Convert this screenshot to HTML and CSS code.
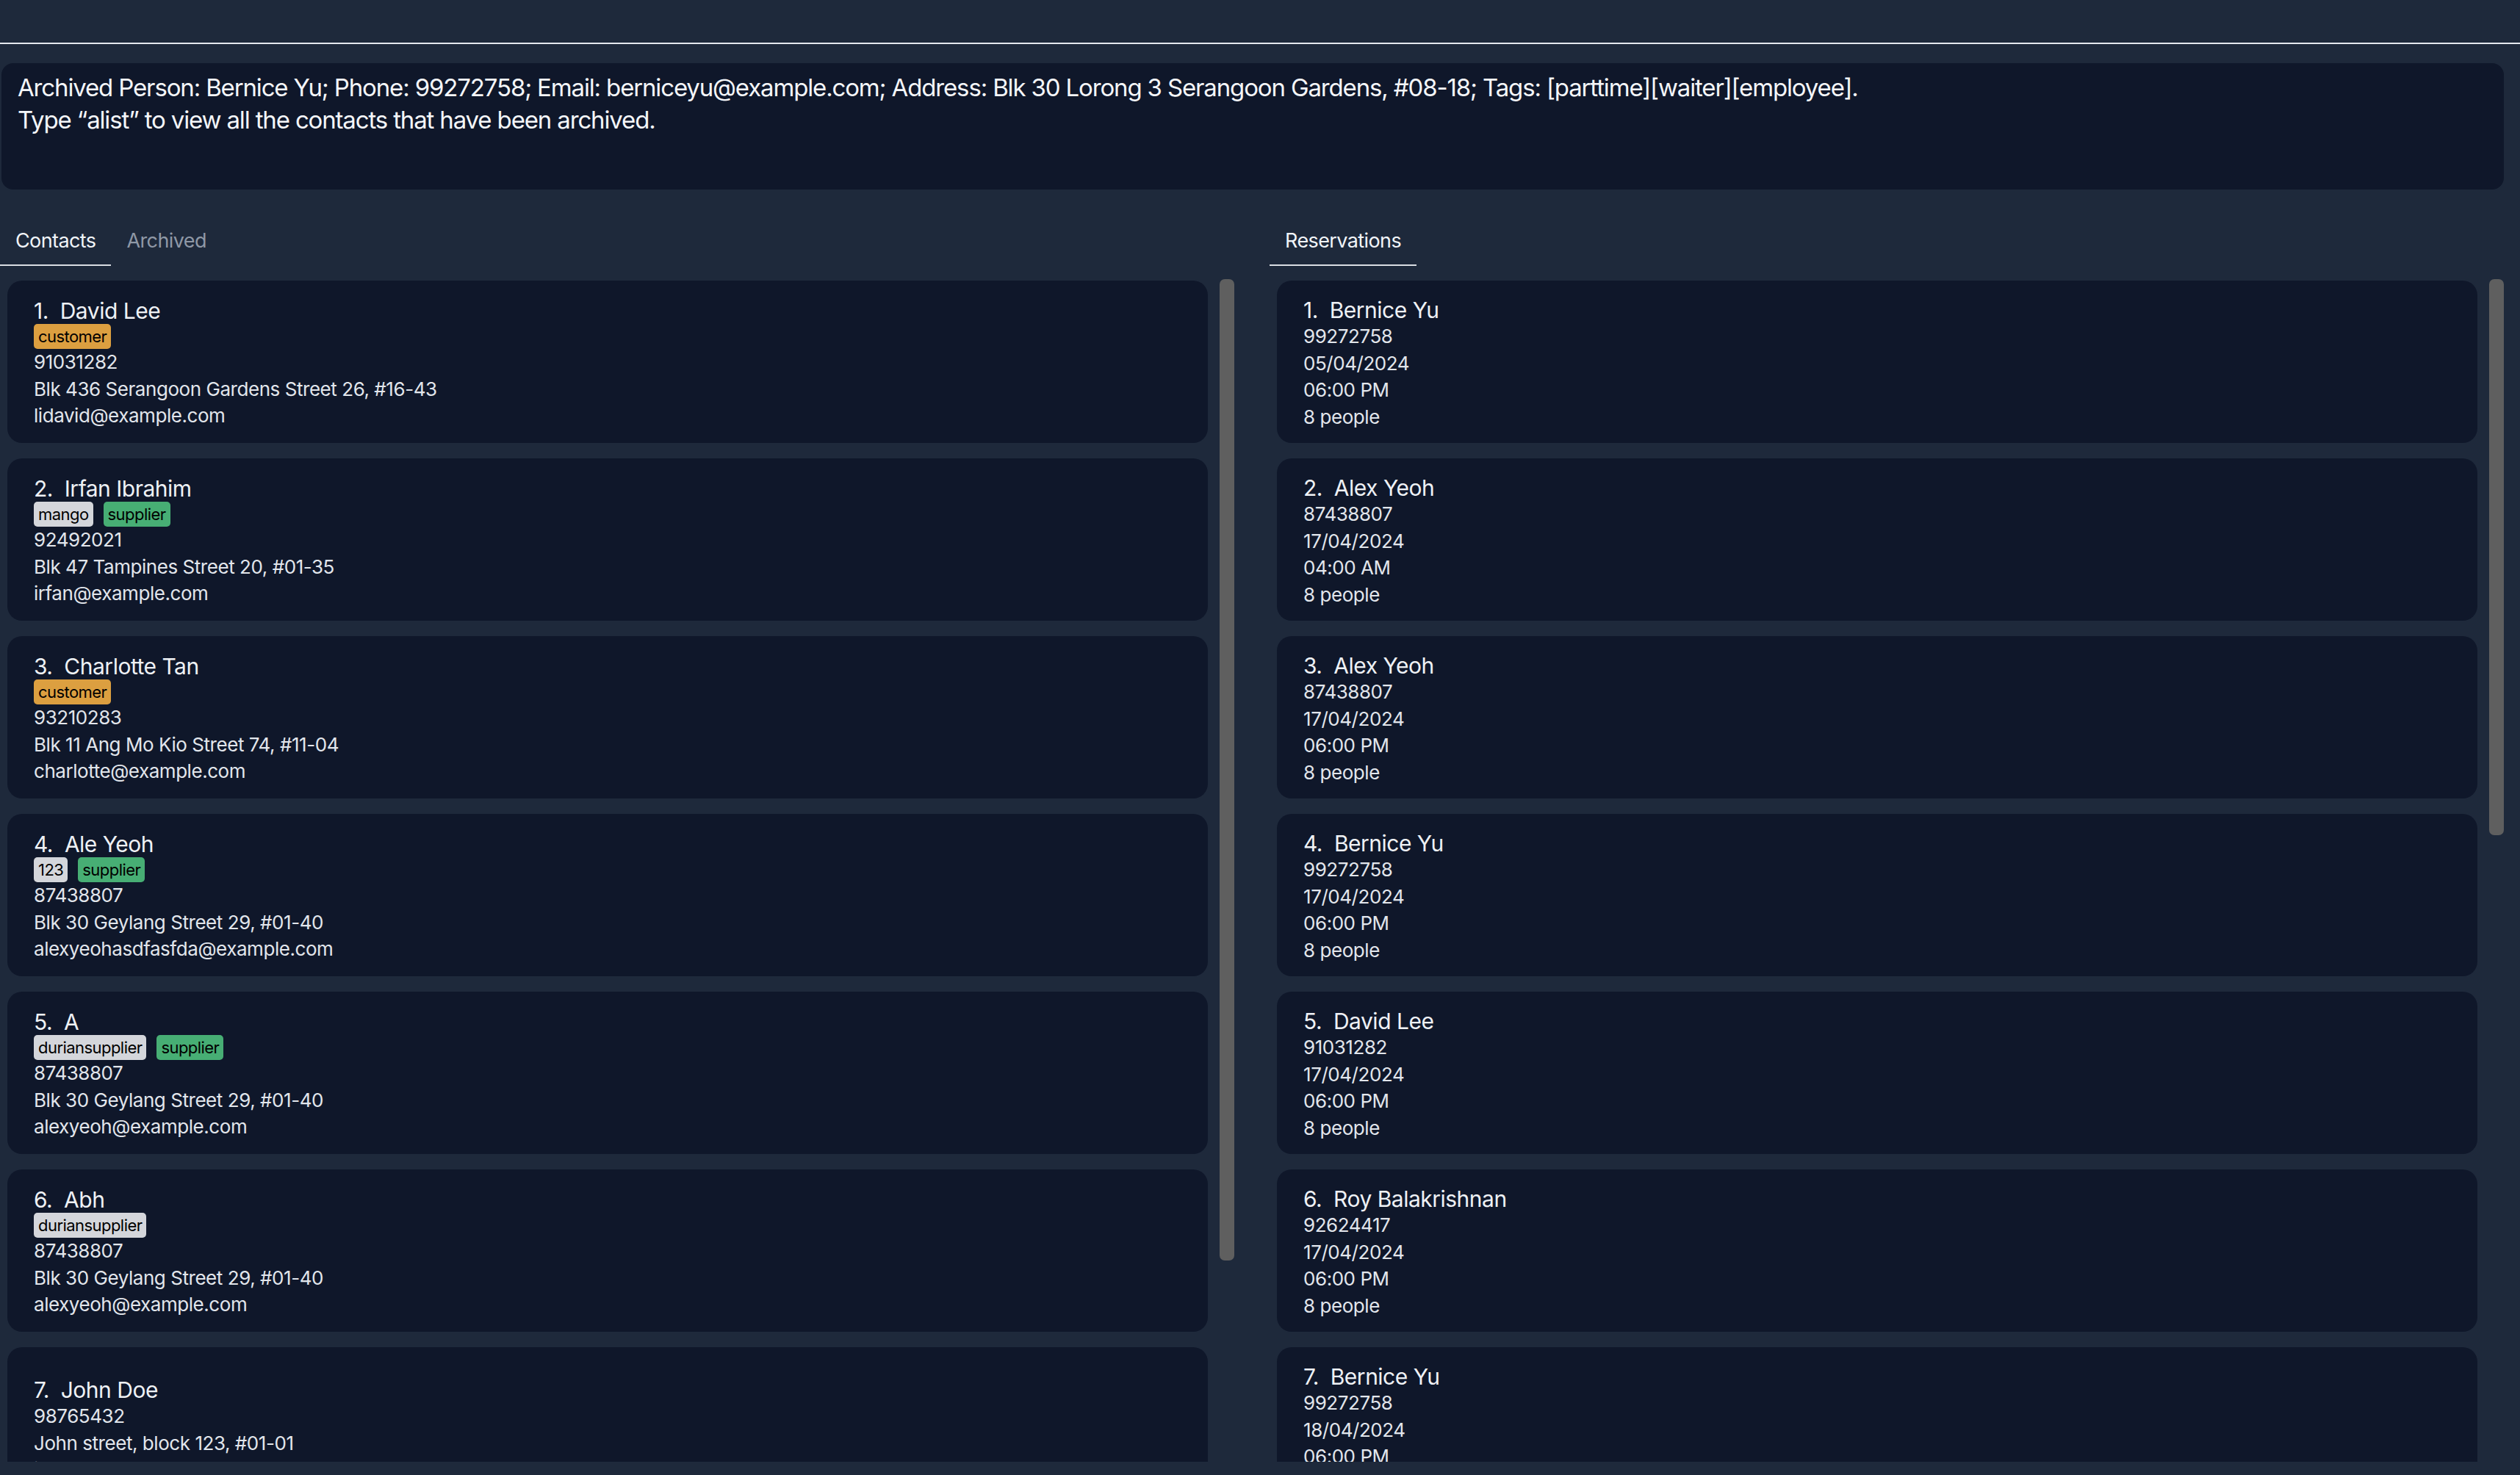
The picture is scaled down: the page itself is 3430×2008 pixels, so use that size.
FILE: index.html
```html
<!DOCTYPE html>
<html lang="en">
<head>
<meta charset="utf-8">
<title>Contacts</title>
<link rel="stylesheet" href="styles.css">
</head>
<body>
<div class="topbar"></div>
<div class="result">
  <p>Archived Person: Bernice Yu; Phone: 99272758; Email: berniceyu@example.com; Address: Blk 30 Lorong 3 Serangoon Gardens, #08-18; Tags: [parttime][waiter][employee].</p>
  <p>Type “alist” to view all the contacts that have been archived.</p>
</div>
<div class="panels">
  <section class="panel">
    <div class="tabs">
      <span class="tab active">Contacts</span>
      <span class="tab">Archived</span>
    </div>
    <div class="listwrap">
      <div class="list">
        <div class="card">
          <div class="name">1.&nbsp; David Lee</div>
          <div class="tags"><span class="tag orange">customer</span></div>
          <div class="line">91031282</div>
          <div class="line">Blk 436 Serangoon Gardens Street 26, #16-43</div>
          <div class="line">lidavid@example.com</div>
        </div>
        <div class="card">
          <div class="name">2.&nbsp; Irfan Ibrahim</div>
          <div class="tags"><span class="tag gray">mango</span><span class="tag green">supplier</span></div>
          <div class="line">92492021</div>
          <div class="line">Blk 47 Tampines Street 20, #01-35</div>
          <div class="line">irfan@example.com</div>
        </div>
        <div class="card">
          <div class="name">3.&nbsp; Charlotte Tan</div>
          <div class="tags"><span class="tag orange">customer</span></div>
          <div class="line">93210283</div>
          <div class="line">Blk 11 Ang Mo Kio Street 74, #11-04</div>
          <div class="line">charlotte@example.com</div>
        </div>
        <div class="card">
          <div class="name">4.&nbsp; Ale Yeoh</div>
          <div class="tags"><span class="tag gray">123</span><span class="tag green">supplier</span></div>
          <div class="line">87438807</div>
          <div class="line">Blk 30 Geylang Street 29, #01-40</div>
          <div class="line">alexyeohasdfasfda@example.com</div>
        </div>
        <div class="card">
          <div class="name">5.&nbsp; A</div>
          <div class="tags"><span class="tag gray">duriansupplier</span><span class="tag green">supplier</span></div>
          <div class="line">87438807</div>
          <div class="line">Blk 30 Geylang Street 29, #01-40</div>
          <div class="line">alexyeoh@example.com</div>
        </div>
        <div class="card">
          <div class="name">6.&nbsp; Abh</div>
          <div class="tags"><span class="tag gray">duriansupplier</span></div>
          <div class="line">87438807</div>
          <div class="line">Blk 30 Geylang Street 29, #01-40</div>
          <div class="line">alexyeoh@example.com</div>
        </div>
        <div class="card">
          <div class="name">7.&nbsp; John Doe</div>
          <div class="line">98765432</div>
          <div class="line">John street, block 123, #01-01</div>
          <div class="line">johnd@example.com</div>
        </div>
      </div>
      <div class="track"><div class="thumb" style="height:1336px"></div></div>
    </div>
  </section>
  <section class="panel">
    <div class="tabs">
      <span class="tab active">Reservations</span>
    </div>
    <div class="listwrap">
      <div class="list">
        <div class="card">
          <div class="name">1.&nbsp; Bernice Yu</div>
          <div class="line">99272758</div>
          <div class="line">05/04/2024</div>
          <div class="line">06:00 PM</div>
          <div class="line">8 people</div>
        </div>
        <div class="card">
          <div class="name">2.&nbsp; Alex Yeoh</div>
          <div class="line">87438807</div>
          <div class="line">17/04/2024</div>
          <div class="line">04:00 AM</div>
          <div class="line">8 people</div>
        </div>
        <div class="card">
          <div class="name">3.&nbsp; Alex Yeoh</div>
          <div class="line">87438807</div>
          <div class="line">17/04/2024</div>
          <div class="line">06:00 PM</div>
          <div class="line">8 people</div>
        </div>
        <div class="card">
          <div class="name">4.&nbsp; Bernice Yu</div>
          <div class="line">99272758</div>
          <div class="line">17/04/2024</div>
          <div class="line">06:00 PM</div>
          <div class="line">8 people</div>
        </div>
        <div class="card">
          <div class="name">5.&nbsp; David Lee</div>
          <div class="line">91031282</div>
          <div class="line">17/04/2024</div>
          <div class="line">06:00 PM</div>
          <div class="line">8 people</div>
        </div>
        <div class="card">
          <div class="name">6.&nbsp; Roy Balakrishnan</div>
          <div class="line">92624417</div>
          <div class="line">17/04/2024</div>
          <div class="line">06:00 PM</div>
          <div class="line">8 people</div>
        </div>
        <div class="card">
          <div class="name">7.&nbsp; Bernice Yu</div>
          <div class="line">99272758</div>
          <div class="line">18/04/2024</div>
          <div class="line">06:00 PM</div>
          <div class="line">8 people</div>
        </div>
      </div>
      <div class="track"><div class="thumb" style="height:757px"></div></div>
    </div>
  </section>
</div>
</body>
</html>
```
FILE: styles.css
```css
* { box-sizing: border-box; }
html, body {
  margin: 0;
  padding: 0;
  background: #1e293b;
  height: 100%;
  overflow: hidden;
}
body {
  font-family: Inter, "Noto Sans", sans-serif;
  color: #e2e8f0;
}
.topbar {
  height: 60px;
  border-bottom: 2px solid #e5e9ef;
}
.result {
  margin: 26px 22px 0 2px;
  height: 172px;
  background: #0f172a;
  border-radius: 16px;
  padding: 11px 22px;
  font-size: 33px;
  line-height: 44px;
  letter-spacing: -1.15px;
  color: #f4f6f9;
}
.result p { margin: 0; white-space: nowrap; }
.panels {
  display: flex;
  gap: 48px;
  padding-right: 22px;
  padding-top: 52px;
}
.panel {
  flex: 1;
  min-width: 0;
}
.tabs {
  display: flex;
}
.tab {
  font-size: 27px;
  line-height: 36px;
  letter-spacing: -0.6px;
  padding: 0 21px 14px;
  border-bottom: 2px solid transparent;
  color: #8f98a6;
}
.tab.active {
  color: #f1f4f8;
  border-bottom-color: #d9dde3;
}
.listwrap {
  margin-top: 18px;
  height: 1610px;
  overflow: hidden;
  display: flex;
  gap: 16px;
  padding-left: 10px;
}
.list {
  flex: 1;
  min-width: 0;
  padding-top: 2px;
  display: flex;
  flex-direction: column;
  gap: 21px;
}
.card {
  flex: none;
  height: 221px;
  background: #0f172a;
  border-radius: 20px;
  padding: 5px 0 0 36px;
  display: flex;
  flex-direction: column;
  justify-content: center;
}
.name {
  font-size: 30px;
  line-height: 36px;
  letter-spacing: -0.5px;
  color: #eef1f5;
  white-space: pre;
}
.line {
  font-size: 26px;
  line-height: 36.5px;
  letter-spacing: -0.45px;
  color: #e2e6ec;
}
.tags {
  display: flex;
  gap: 14px;
  height: 34px;
}
.tag {
  height: 34px;
  padding: 0 6px;
  border-radius: 5px;
  font-size: 22px;
  line-height: 34px;
  letter-spacing: -0.55px;
  color: #000;
}
.tag.orange { background: #dc9f40; }
.tag.green { background: #47ae74; }
.tag.gray { background: #d4d6db; }
.track {
  flex: none;
  width: 20px;
}
.thumb {
  width: 20px;
  background: #5f5f5f;
  border-radius: 7px;
}
```
